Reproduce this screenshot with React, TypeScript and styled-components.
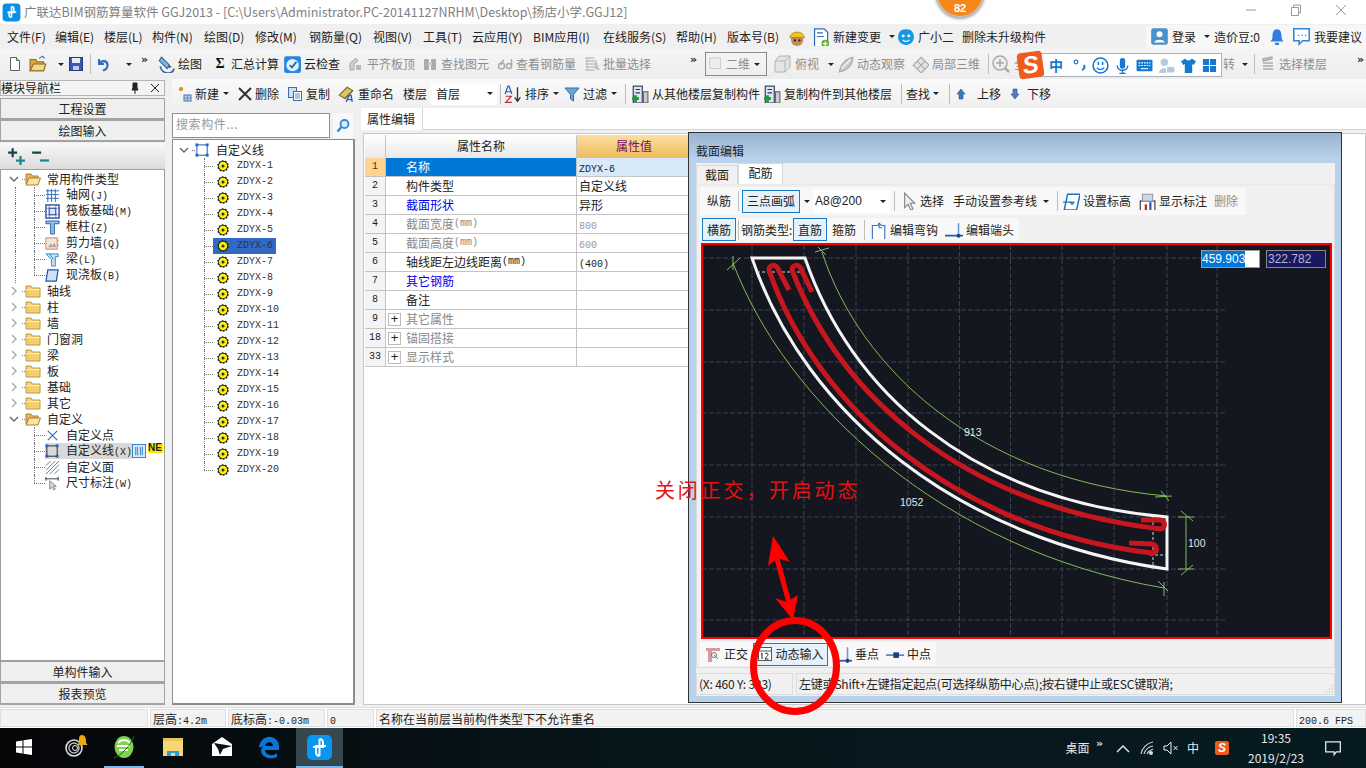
import React from "react";
import styled, { createGlobalStyle } from "styled-components";

const CJK = `"Noto Sans CJK SC", "Liberation Sans", sans-serif`;
const MONO = `"Liberation Mono", "Noto Sans CJK SC", monospace`;

const Global = createGlobalStyle`
  html, body { margin: 0; padding: 0; background: #fff; }
  * { box-sizing: border-box; }
  body { font: 12px/16px ${CJK}; color: #222; }
`;

const Root = styled.div`
  position: relative; width: 1366px; height: 768px; overflow: hidden;
  display: flex; flex-direction: column; background: #f0f0f0;
`;
const TitleBar = styled.div`
  height: 24px; flex: none; background: #fff; display: flex; align-items: center;
  padding-left: 2px; gap: 3px; color: #808080; font-size: 12.5px; position: relative;
`;
const WinButtons = styled.div`
  margin-left: auto; display: flex; width: 132px; height: 24px; align-items: center; justify-content: space-between; padding: 0 19px 4px 11px;
`;
const MenuBar = styled.div`height: 25px; flex: none; background: #f0f0f0; display: flex; align-items: center; padding-left: 7px;`;
const MenuItem = styled.span<{ $w: number; $ml?: number }>`flex: none; width: ${p => p.$w}px; margin-left: ${p => p.$ml ?? 0}px; white-space: nowrap; font-size: 12px; color: #222; display: inline-flex; align-items: center; gap: 3px;`;
const UserBox = styled.div`
  margin-left: 92px; height: 24px; width: 220px; background: #f7f7f7; display: flex; align-items: center; padding-left: 4px;
`;
const ToolRow = styled.div`
  height: 30px; flex: none; display: flex; align-items: center; padding-left: 7px;
  background: linear-gradient(#f5f5f5, #ededed);
`;
const Tool = styled.span<{ $w?: number; $muted?: boolean; $ml?: number }>`
  flex: none; display: inline-flex; align-items: center; gap: 3px; white-space: nowrap;
  width: ${p => (p.$w ? p.$w + "px" : "auto")}; margin-left: ${p => p.$ml ?? 0}px;
  color: ${p => (p.$muted ? "#8e8e8e" : "#222")}; font-size: 12px;
`;
const Sep = styled.span<{ $mx?: number }>`flex: none; width: 1px; height: 20px; background: #bdbdbd; margin: 0 ${p => p.$mx ?? 4}px;`;
const Caret = styled.span<{ $w?: number }>`
  flex: none; display: inline-flex; justify-content: center; width: ${p => p.$w ?? 10}px;
  &::after { content: ""; border: 3px solid transparent; border-top: 3px solid #222; margin-top: 3px; }
`;
const Chevrons = styled.span<{ $w?: number; $light?: boolean }>`
  flex: none; width: ${p => p.$w ?? 14}px; font: bold 11px/10px "DejaVu Sans", sans-serif; color: ${p => (p.$light ? "#ddd" : "#222")}; margin-top: -8px;
`;
const ViewCombo = styled.span`
  flex: none; width: 62px; height: 24px; border: 1px solid #8a8a8a; display: inline-flex; align-items: center; padding-left: 3px; gap: 3px; color: #8e8e8e; margin-right: 5px;
`;
const Sigma = styled.span`flex: none; width: 16px; text-align: center; font: bold 14px/16px "Liberation Serif", serif; color: #111;`;

const Workspace = styled.div`flex: 1; display: flex; min-height: 0;`;
const LeftCol = styled.div`width: 165px; flex: none; display: flex; flex-direction: column; padding: 1px 0 2px; background: #f0f0f0;`;
const PaneHeader = styled.div`
  height: 16px; flex: none; display: flex; align-items: center; border: 1px solid #b5b5b5; background: #f4f4f4; justify-content: space-between; padding-right: 3px; font-size: 12px; line-height: 14px;
`;
const PaneActions = styled.span`display: flex; gap: 8px;`;
const NavButton = styled.div<{ $mt?: number }>`
  height: 22px; flex: none; margin-top: ${p => p.$mt ?? 0}px; text-align: center; font-size: 12px; line-height: 20px;
  border: 1px solid #a3a3a3; border-bottom-width: 2px; background: #efefef; color: #222;
`;
const PlusBar = styled.div`
  height: 26px; flex: none; margin-top: 1px; background: linear-gradient(#f8f8f8, #dcdcdc); display: flex; align-items: center; gap: 6px; padding-left: 7px;
`;
const TreeBox = styled.div<{ $pt?: number }>`
  flex: 1; min-height: 0; background: #fff; border: 1px solid #9e9e9e; padding-top: ${p => p.$pt ?? 1}px; overflow: hidden; position: relative;
`;
const Row = styled.div<{ $pl?: number }>`height: 16px; display: flex; align-items: center; padding-left: ${p => p.$pl ?? 0}px; white-space: nowrap; position: relative;`;
const Expander = styled.span<{ $w?: number }>`flex: none; width: ${p => p.$w ?? 16}px; display: inline-flex; justify-content: center;`;
const Stub = styled.span<{ $w: number }>`flex: none; width: ${p => p.$w}px; border-top: 1px dotted #777; height: 0;`;
const Branch = styled.span<{ $last?: boolean; $w?: number }>`
  flex: none; width: ${p => p.$w ?? 11}px; height: 16px; position: relative;
  &::before { content: ""; position: absolute; left: 0; top: 0; height: ${p => (p.$last ? "8px" : "16px")}; border-left: 1px dotted #777; }
  &::after { content: ""; position: absolute; left: 0; right: 0; top: 8px; border-top: 1px dotted #777; }
`;
const OuterLine = styled.span<{ $on?: boolean }>`flex: none; width: 19px; height: 16px; margin-left: 14px; border-left: ${p => (p.$on ? "1px dotted #777" : "0")};`;
const TreeText = styled.span`
  font-size: 12px; line-height: 16px; margin-left: 6px; color: #222;
`;
const Half = styled.span`font: 10px/16px ${MONO}; color: inherit;`;
const SelectedRow = styled.span`display: inline-flex; align-items: center; background: #d9d9d9; height: 16px; width: 87px; flex: none;`;
const NewBadge = styled.span`font: bold 10px/10px "Liberation Sans", sans-serif; color: #222; background: #ffe800; width: 15px; overflow: hidden; height: 10px; margin-top: -7px; flex: none; margin-left: 1px;`;
const RightCol = styled.div`flex: 1; display: flex; flex-direction: column; min-width: 0;`;
const ToolRow2 = styled(ToolRow)`height: 29px; padding-left: 4px; margin-left: 7px; background: linear-gradient(#fafafa, #efefef);`;
const ComboWhite = styled.span`flex: none; width: 66px; height: 22px; background: #fff; display: inline-flex; align-items: center; justify-content: space-between; padding: 0 3px 0 5px;`;
const Spaced = styled.span<{ $ml: number }>`margin-left: ${p => p.$ml}px;`;
const Body = styled.div`flex: 1; display: flex; min-height: 0;`;
const ListCol = styled.div`width: 183px; margin-left: 7px; flex: none; display: flex; flex-direction: column; padding: 5px 0 2px;`;
const SearchRow = styled.div`height: 26px; flex: none; display: flex; gap: 3px;`;
const SearchInput = styled.div`width: 158px; height: 25px; background: #fff; border: 1px solid #8f8f8f; padding: 1px 3px; color: #999; font-size: 12px; line-height: 18px; letter-spacing: .05em;`;
const SearchBtn = styled.div`width: 20px; height: 25px; background: #f8f8f8; display: flex; align-items: center; justify-content: center;`;
const ListBox = styled(TreeBox)`border-width: 1px 2px 2px 1px; border-color: #8c8c8c;`;
const ListSel = styled.span<{ $on?: boolean }>`
  display: inline-flex; align-items: center; height: 16px; width: 63px; flex: none; padding-left: 4px; gap: 8px;
  background: ${p => (p.$on ? "#316ac5" : "transparent")};
`;
const CodeText = styled.span`font: 10px/16px ${MONO}; color: #333;`;
const Editor = styled.div`flex: 1; margin-left: 6px; display: flex; flex-direction: column; min-width: 0; padding-bottom: 2px;`;
const TabStrip = styled.div`height: 22px; flex: none; display: flex; border-bottom: 1px solid #d4d4d4; background: #fff;`;
const PropTab = styled.div`width: 62px; height: 22px; background: #fff; border-right: 1px solid #d4d4d4; padding: 2px 0 0 6px; font-size: 12px; line-height: 18px; color: #222;`;
const PropBody = styled.div`flex: 1; background: #fff; margin: 3px 0 0 2px; border: 1px solid #c8c8c8; padding: 1px; min-height: 0;`;
const PropGrid = styled.div`display: grid; grid-template-columns: 21px 191px 115px; grid-template-rows: 23px; grid-auto-rows: 19px;`;
const HeadCell = styled.div<{ $val?: boolean }>`
  text-align: center; line-height: 22px; font-size: 12px;
  background: ${p => (p.$val ? "linear-gradient(#fbdf9f, #efbb5d)" : "linear-gradient(#fff, #e9e9e9)")};
  color: ${p => (p.$val ? "#74106e" : "#222")}; border-right: 1px solid #c4c4c4;
`;
const NumCell = styled.div<{ $on?: boolean }>`
  background: ${p => (p.$on ? "#fdd58f" : "#f4f4f4")}; color: ${p => (p.$on ? "#7a1a1a" : "#222")}; text-align: center;
  font: 10px/18px ${MONO}; border-right: 1px solid #c4c4c4; border-bottom: 1px solid #c4c4c4;
`;
const NameCell = styled.div<{ $tone?: string; $on?: boolean }>`
  background: ${p => (p.$on ? "#0078d7" : "#fff")}; color: ${p => (p.$on ? "#fff" : p.$tone || "#222")};
  padding-left: 20px; font-size: 12px; line-height: 18px; border-right: 1px solid #c4c4c4; border-bottom: 1px solid #c4c4c4; white-space: nowrap; display: flex; align-items: center;
`;
const ValCell = styled.div<{ $on?: boolean; $muted?: boolean }>`
  background: ${p => (p.$on ? "#d8e9f9" : "#fff")}; color: ${p => (p.$muted ? "#999" : "#222")};
  padding-left: 2px; font-size: 12px; line-height: 18px; border-bottom: 1px solid #c4c4c4; white-space: nowrap;
`;
const PlusBox = styled.span`
  width: 13px; height: 13px; border: 1px solid #bbb; margin: 0 5px 0 -18px; flex: none; background: #fff; color: #222;
  font: 13px/10px "Liberation Sans", sans-serif; text-align: center;
`;
const StatusBar = styled.div`height: 21px; flex: none; display: flex; gap: 2px; padding: 1px 0; background: #fff; border-top: 1px solid #e0e0e0;`;
const StatusCell = styled.div<{ $w?: number }>`
  ${p => (p.$w ? `width:${p.$w}px;flex:none;` : "flex:1;")} background: #f2f2f2; border: 1px solid #dedede; padding-left: 2px; font-size: 12px; line-height: 17px; color: #222; white-space: nowrap;
`;
const Taskbar = styled.div`height: 40px; flex: none; background: linear-gradient(90deg, #050608, #07171c 50%, #061a20); display: flex; align-items: stretch; color: #eee;`;
const TaskSlot = styled.div<{ $w: number; $state?: "on" | "run" }>`
  width: ${p => p.$w}px; flex: none; display: flex; align-items: center; justify-content: center; position: relative;
  background: ${p => (p.$state === "on" ? "#37474f" : "transparent")};
  border-bottom: 2px solid ${p => (p.$state ? "#76b9ed" : "transparent")};
`;
const Tray = styled.div`margin-left: auto; display: flex; align-items: center; width: 301px; font-size: 12px; color: #e8e8e8;`;
const TrayItem = styled.span<{ $w: number }>`flex: none; width: ${p => p.$w}px; display: inline-flex; justify-content: center;`;
const Clock = styled.div`flex: none; width: 80px; text-align: center; font-size: 12px; line-height: 20px; color: #e8e8e8;`;

const Dialog = styled.div`
  position: absolute; left: 688px; top: 132px; width: 654px; height: 571px; background: #b9d1ea;
  border: 1px solid #2f3336; display: flex; flex-direction: column;
`;
const DialogTitle = styled.div`height: 26px; flex: none; padding: 10px 0 0 7px; font-size: 12px; line-height: 16px; color: #222; background: linear-gradient(#99b4d1, #b9d1ea);`;
const DialogInner = styled.div`flex: none; margin: 4px 6px 0 7px; height: 533px; background: #f0f0f0; display: flex; flex-direction: column;`;
const DialogTabs = styled.div`height: 21px; flex: none; display: flex; align-items: flex-end; background: #f0f0f0;`;
const DialogTab = styled.div<{ $on?: boolean }>`
  height: ${p => (p.$on ? 21 : 19)}px; width: ${p => (p.$on ? 45 : 42)}px; background: ${p => (p.$on ? "#fff" : "#f0f0f0")};
  border: 1px solid #d9d9d9; border-bottom: 0; text-align: center; font-size: 12px; line-height: 17px; color: #222;
`;
const DialogPanel = styled.div`height: 484px; flex: none; background: #f0f0f0; border: 1px solid #dcdcdc; border-top-color: #e8e8e8; padding: 2px 2px 0 3px; display: flex; flex-direction: column;`;
const DlgBar = styled.div<{ $w: number; $mt?: number; $h?: number; $pl?: number }>`
  width: ${p => p.$w}px; height: ${p => p.$h ?? 24}px; flex: none; margin-top: ${p => p.$mt ?? 0}px; background: #f8f8f8; display: flex; align-items: center; padding-left: ${p => p.$pl ?? 2}px;
`;
const LeadTool = styled(Tool)`padding-left: 5px;`;
const ActiveBtn = styled.span<{ $w: number; $ml?: number }>`
  flex: none; width: ${p => p.$w}px; height: 23px; margin-left: ${p => p.$ml ?? 0}px; border: 1px solid #1a7cc4; background: #e5f1fb;
  display: inline-flex; align-items: center; justify-content: center; gap: 2px; font-size: 12px; color: #222;
`;
const ComboA = styled.span`flex: none; width: 77px; height: 23px; background: #fff; display: inline-flex; align-items: center; justify-content: space-between; padding: 0 2px 0 2px; font: 12px/16px "Liberation Sans", sans-serif;`;
const CanvasWrap = styled.div`width: 631px; height: 396px; flex: none; margin: 2px 0 0 1px; border: 2px solid #f00; position: relative; background: #141720;`;
const CanvasSvg = styled.svg`display: block; width: 627px; height: 392px;`;
const CoordA = styled.div`
  position: absolute; left: 498px; top: 5px; width: 59px; height: 18px; background: #fff; border: 1px solid #999; font: 12px/16px "Liberation Sans", sans-serif;
`;
const CoordSel = styled.span`background: #0078d7; color: #fff; display: inline-block; height: 16px;`;
const CoordB = styled.div`
  position: absolute; left: 563px; top: 5px; width: 60px; height: 18px; background: #191960; border: 1px solid #888; color: #b4b4d8; padding-left: 1px; font: 12px/16px "Liberation Sans", sans-serif;
`;
const DlgStatus = styled.div`height: 22px; flex: none; margin-top: 5px; display: flex; gap: 3px;`;
const DlgCell = styled.div<{ $w?: number }>`
  ${p => (p.$w ? `width:${p.$w}px;flex:none;` : "flex:1;")} background: #f0f0f0; border: 1px solid #dcdcdc; padding-left: 2px; font-size: 12px; line-height: 20px; color: #222; white-space: nowrap; overflow: hidden; position: relative; letter-spacing: -.2px;
`;
const Grip = styled.svg`position: absolute; right: 0; bottom: 0; width: 10px; height: 10px;`;
const Badge = styled.div`
  position: absolute; left: 936px; top: -33px; width: 48px; height: 50px; border-radius: 50%; background: #f7871a; border: 1px solid #c9c9c9;
  box-shadow: 0 1px 3px 1px rgba(90,90,90,.55); color: #fff; text-align: center; padding-top: 33px; font: bold 11px/14px "Liberation Sans", sans-serif;
`;
const Sogou = styled.div`
  position: absolute; left: 1020px; top: 53px; width: 202px; height: 24px; background: #fff; border: 1px solid #a8b0c0; display: flex; align-items: center; padding-left: 28px; gap: 5px; color: #1679d0;
`;
const SogouS = styled.div`
  position: absolute; left: 1018px; top: 52px; width: 25px; height: 26px; background: #ef5a1d; transform: rotate(-8deg); border-radius: 4px; color: #fff;
  font: italic bold 24px/25px "Liberation Sans", sans-serif; text-align: center;
`;
const SogouZh = styled.span`font: bold 14px/16px ${CJK}; color: #1679d0; width: 16px; flex: none; margin-right: 3px;`;
const Note = styled.div`position: absolute; left: 655px; top: 478px; color: #e81010; font: 400 20px/26px "Liberation Serif", "Noto Sans CJK SC", serif; letter-spacing: 2.8px; white-space: nowrap;`;
const Marks = styled.svg`position: absolute; left: 740px; top: 530px; width: 110px; height: 190px; pointer-events: none;`;

const IconSvg = styled.svg`flex: none; display: block;`;
const Svg: React.FC<React.PropsWithChildren<{ s?: number; vb?: string }>> = ({ s = 16, vb = "0 0 16 16", children }) => (
  <IconSvg width={s} height={s} viewBox={vb}>{children}</IconSvg>
);

const I = {
  app: () => <Svg s={19}><rect x="0.5" y="0.5" width="15" height="15" rx="3" fill="#0a8ee8" /><path d="M8 3v9M8 3a2 2 0 0 1 2 2v3H4.5M8 12a2 2 0 0 1-2-2V7.5h6" fill="none" stroke="#fff" strokeWidth="1.3" /></Svg>,
  doc: () => <Svg><path d="M3.5 1.5h6l3 3v10h-9z" fill="#fff" stroke="#5a6470" /><path d="M9.5 1.5v3h3" fill="#dde" stroke="#5a6470" /></Svg>,
  open: () => <Svg s={18}><path d="M1 4h5l1 2h6v8H1z" fill="#d9a93c" stroke="#8a6a20" /><path d="M1 14l3-6h11l-2 6z" fill="#f4d88a" stroke="#8a6a20" /><path d="M9 3l3-2 2 2" fill="none" stroke="#3a70b0" /></Svg>,
  save: () => <Svg><rect x="1.5" y="1.5" width="13" height="13" fill="#3f58b8" stroke="#28367a" /><rect x="4" y="2" width="8" height="5" fill="#e8ecf8" /><rect x="5" y="10" width="6" height="4" fill="#c8cfe4" /></Svg>,
  undo: () => <Svg><path d="M4 3v5h5" fill="none" stroke="#2b6cc4" strokeWidth="2" /><path d="M4.5 8C6 4 12 4 12.5 8.5 13 12 10 14 8 14.5" fill="none" stroke="#2b6cc4" strokeWidth="2.2" /></Svg>,
  draw: () => <Svg s={18}><path d="M4 2l7 7-2 3-7-7z" fill="#8fb4e2" stroke="#3a65a5" /><path d="M3 10c0 4 4 6 7 6 3 0 5-2 5-4" fill="none" stroke="#3a65a5" strokeWidth="1.5" /><path d="M10 9l3 1-2 2z" fill="#555" /></Svg>,
  cloud: () => <Svg s={18}><rect x="1" y="1" width="15" height="15" rx="2" fill="#2a86d8" /><circle cx="8.5" cy="9" r="5.5" fill="#dff0ff" /><path d="M6 9l2 2 4-5" fill="none" stroke="#1a66b0" strokeWidth="1.6" /></Svg>,
  level: () => <Svg><path d="M2 14V7l6-5 2 3-4 3v6z" fill="#ccc" stroke="#aaa" /><path d="M8 14V9h5v5z" fill="#b8b8b8" /></Svg>,
  binoc: () => <Svg><rect x="2" y="3" width="5" height="11" rx="1" fill="#aaa" /><rect x="9" y="3" width="5" height="11" rx="1" fill="#aaa" /><rect x="6" y="6" width="4" height="3" fill="#ccc" /></Svg>,
  qty: () => <Svg><circle cx="4.5" cy="10" r="3" fill="none" stroke="#aaa" strokeWidth="1.5" /><path d="M7 4C5 5 4.5 7 4 9" stroke="#aaa" fill="none" strokeWidth="1.5" /><circle cx="12" cy="10" r="2.5" fill="none" stroke="#aaa" strokeWidth="1.5" /><path d="M14.5 3v7" stroke="#aaa" strokeWidth="1.5" /></Svg>,
  batch: () => <Svg><path d="M1.5 2h9M1.5 5h11M1.5 8h11M1.5 11h11M1.5 14h9" stroke="#aaa" /><path d="M3 1v14M12 6l3 8-4-2z" stroke="#bbb" fill="#ccc" /></Svg>,
  box: () => <Svg s={14}><rect x="1" y="1" width="12" height="12" fill="#eee" stroke="#c4c4c4" /></Svg>,
  cube: () => <Svg s={20} vb="0 0 20 20"><path d="M3 7l4-5h11v11l-5 5H3z" fill="#e4e4e4" stroke="#b4b4b4" /><path d="M3 7h10v11M13 7l5-5" fill="none" stroke="#b4b4b4" /></Svg>,
  orbit: () => <Svg s={18}><path d="M3 15C4 8 9 3 15 2c0 7-5 12-12 13z" fill="#c8c8c8" stroke="#aaa" /><path d="M5 12l8-8" stroke="#eee" strokeWidth="1.5" /></Svg>,
  part3d: () => <Svg s={18}><path d="M9 2l7 7-7 7-7-7z" fill="#e4e4e4" stroke="#aaa" /><path d="M5.5 5.5l7 7M12.5 5.5l-7 7" stroke="#aaa" /></Svg>,
  zoom: () => <Svg s={20} vb="0 0 20 20"><circle cx="9" cy="9" r="7" fill="#eee" stroke="#aaa" strokeWidth="1.5" /><path d="M9 5v8M5 9h8" stroke="#aaa" strokeWidth="1.5" /><path d="M14 14l4 4" stroke="#aaa" strokeWidth="2.5" /></Svg>,
  floors: () => <Svg><path d="M3 3l9-2v2l-9 2zM3 7h10M3 10h10M3 13h10" stroke="#aaa" fill="#ddd" strokeWidth="1.3" /></Svg>,
  newBtn: () => <Svg><path d="M5 1v4M3 3h4" stroke="#d89a10" strokeWidth="2.5" /><rect x="8" y="9" width="7" height="6" fill="#bcd2ee" stroke="#4a74b0" /><path d="M11.5 9v6M8 12h7" stroke="#4a74b0" strokeWidth=".7" /></Svg>,
  x: () => <Svg><path d="M2 2l12 12M14 2L2 14" stroke="#333" strokeWidth="2" /></Svg>,
  copy: () => <Svg><rect x="1.5" y="1.5" width="8" height="10" fill="#cfe0f5" stroke="#3d6db0" /><rect x="6.5" y="5.5" width="8" height="9" fill="#fff" stroke="#3d6db0" /><path d="M8 8h5M8 10h5M8 12h5" stroke="#3d6db0" strokeWidth=".8" /></Svg>,
  rename: () => <Svg s={18}><path d="M2 9l7-7 5 3-7 7z" fill="#e5c35c" stroke="#7a6a30" /><path d="M7 12l7-7" stroke="#7a6a30" /><path d="M8 15l3-6h1.500l1 6M9.500 13h3.500" fill="none" stroke="#2a5ba8" strokeWidth="1.200" /></Svg>,
  sort: () => <Svg s={18}><path d="M1 8l2.500-7h1L7 8M2 6h4" fill="none" stroke="#2a5ba8" strokeWidth="1.100" /><path d="M1.500 10h5l-5 5.500h5.500" fill="none" stroke="#c42a2a" strokeWidth="1.100" /><path d="M12 2v12M9.500 11l2.500 3.500 2.500-3.500" fill="none" stroke="#333" strokeWidth="1.200" /></Svg>,
  filter: () => <Svg><path d="M1 2h14L9.500 8.500V15l-3-2V8.500z" fill="#6ea4dc" stroke="#2f6cb2" /></Svg>,
  fromFloor: () => <Svg s={18}><rect x="2" y="1" width="8" height="15" fill="#dde6f2" stroke="#335" /><path d="M4 4h4M4 7h4" stroke="#335" /><rect x="11" y="6" width="4" height="10" fill="#ccc" stroke="#666" /><path d="M1 12h6M4 9v6" stroke="#1b9a35" strokeWidth="2.500" /></Svg>,
  up: () => <Svg s={12} vb="0 0 12 12"><path d="M6 1l4 5H8v5H4V6H2z" fill="#3d78c8" stroke="#23528f" strokeWidth=".6" /></Svg>,
  down: () => <Svg s={12} vb="0 0 12 12"><path d="M6 11l4-5H8V1H4v5H2z" fill="#5b78c0" stroke="#23528f" strokeWidth=".6" /></Svg>,
  helmet: () => <Svg s={18}><circle cx="9" cy="10.500" r="5.500" fill="#c58a5c" /><path d="M2.500 8.500C3 2 15 2 15.500 8.500z" fill="#f2c31c" stroke="#9a7a10" strokeWidth=".6" /><circle cx="7" cy="11" r="1" fill="#222" /><circle cx="11" cy="11" r="1" fill="#222" /></Svg>,
  change: () => <Svg s={19}><path d="M3 1.500h8l3 3v12H3z" fill="#fff" stroke="#2a6cb8" /><path d="M5 5h5M5 8h6" stroke="#2a6cb8" /><circle cx="12" cy="14" r="3.200" fill="#5bb030" /><path d="M12 12v4M10 14h4" stroke="#fff" /></Svg>,
  mascot: () => <Svg s={18}><path d="M8 1c5 0 7 3 7 7s-3 7-7 7-7-3-7-7 2-7 7-7z" fill="#1398e8" /><circle cx="5.500" cy="7" r="1.300" fill="#fff" /><circle cx="10.500" cy="7" r="1.300" fill="#fff" /><path d="M5 10.500c2 2 4 2 6 0" stroke="#fff" fill="none" /></Svg>,
  user: () => <Svg s={19}><rect x="1" y="1" width="14" height="14" rx="2" fill="#4a92ca" /><circle cx="8" cy="6" r="2.500" fill="#fff" /><path d="M3.500 13c.5-3 8.500-3 9 0z" fill="#fff" /></Svg>,
  bell: () => <Svg s={18}><path d="M8 1c3 0 4 3 4 6 0 3 1 4 2 5H2c1-1 2-2 2-5 0-3 1-6 4-6z" fill="#2f7fe0" /><rect x="6" y="13" width="4" height="2" rx="1" fill="#2f7fe0" /></Svg>,
  chat: () => <Svg s={19}><path d="M1.500 1.500h13v10H9l-3 3v-3H1.500z" fill="#fff" stroke="#2f86d8" strokeWidth="1.300" /><path d="M5 7h1M8 7h1M11 7h1" stroke="#2f86d8" /></Svg>,
  pin: () => <Svg s={12} vb="0 0 12 12"><path d="M4 1h4v5l1 2H3l1-2zM6 8v4" fill="#222" stroke="#222" /></Svg>,
  close: () => <Svg s={12} vb="0 0 12 12"><path d="M2 2l8 8M10 2l-8 8" stroke="#222" /></Svg>,
  plus2: () => <Svg s={18}><path d="M5 1v8M1 5h8" stroke="#13444a" strokeWidth="2" /><path d="M12 8v8M8 12h8" stroke="#1a8a8a" strokeWidth="2" /></Svg>,
  minus2: () => <Svg s={18}><path d="M1 5h8" stroke="#13444a" strokeWidth="2" /><path d="M8 12h8" stroke="#1a8a8a" strokeWidth="2" /></Svg>,
  chevD: () => <svg width="10" height="6" viewBox="0 0 10 6"><path d="M1 1l4 4 4-4" fill="none" stroke="#666" strokeWidth="1.400" /></svg>,
  chevR: () => <svg width="6" height="10" viewBox="0 0 6 10"><path d="M1 1l4 4-4 4" fill="none" stroke="#aaa" strokeWidth="1.400" /></svg>,
  folder: () => <Svg><path d="M1 3h5l1.500 2H15v9H1z" fill="#f2cf72" stroke="#c09a40" /><path d="M1.500 6h13v1h-13z" fill="#fff3c4" /></Svg>,
  folderOpen: () => <Svg><path d="M1 3h5l1.500 2H13v8H1z" fill="#e3b654" stroke="#a8843a" /><path d="M1 14l3-7h11.500L13 14z" fill="#fbe4a2" stroke="#a8843a" /></Svg>,
  grid: () => <Svg s={15}><path d="M3 1v14M7 1v14M11 1v14M1 3h14M1 7h14M1 11h14" stroke="#3166bd" strokeWidth="1" /></Svg>,
  raft: () => <Svg s={15}><rect x="1" y="1" width="14" height="14" fill="none" stroke="#2d4fa0" strokeWidth="1.500" /><rect x="4.500" y="4.500" width="7" height="7" fill="#dbe6f6" stroke="#2d4fa0" /><path d="M1 4.500h14M1 11.500h14M4.500 1v14M11.500 1v14" stroke="#2d4fa0" strokeWidth=".6" /></Svg>,
  column: () => <Svg s={15}><path d="M1 1h14v3H10v11H6V4H1z" fill="#8dbfe8" stroke="#2d5fa8" /></Svg>,
  wall: () => <Svg s={15}><rect x="1" y="2" width="12" height="12" fill="#f4e6dc" stroke="#c88050" /><path d="M3 12l3-4 2 2 2-3 2 5z" fill="#aaa" /><path d="M14 4v2M14 9v2" stroke="#e08030" /></Svg>,
  beam: () => <Svg s={15}><path d="M1 2h13v3H11v10H7V8z" fill="#c9e4f7" stroke="#2f86c8" /><path d="M5 2l4 6" stroke="#2f86c8" /></Svg>,
  slab: () => <Svg s={15}><path d="M3 2h11l-2 12H1z" fill="#cfe2f6" stroke="#1e56ae" strokeWidth="1.300" /></Svg>,
  point: () => <Svg s={15}><path d="M3 3l10 10M13 3L3 13" stroke="#3170b8" strokeWidth="1.300" /></Svg>,
  line: () => <Svg s={15}><rect x="2" y="2" width="11" height="11" fill="none" stroke="#222" /><g fill="#1f62c8"><rect x="0.500" y="0.500" width="3" height="3" /><rect x="11.500" y="0.500" width="3" height="3" /><rect x="0.500" y="11.500" width="3" height="3" /><rect x="11.500" y="11.500" width="3" height="3" /></g></Svg>,
  rootLine: () => <Svg s={15}><rect x="2" y="2" width="11" height="11" fill="none" stroke="#1e50b4" /><g fill="#1f62c8"><rect x="0.500" y="0.500" width="3" height="3" /><rect x="11.500" y="0.500" width="3" height="3" /><rect x="0.500" y="11.500" width="3" height="3" /><rect x="11.500" y="11.500" width="3" height="3" /></g></Svg>,
  face: () => <Svg s={15}><path d="M1 6l5-5M1 11L11 1M1 15L15 1M5 15L15 5M10 15l5-5" stroke="#4a78c0" /></Svg>,
  dim: () => <Svg s={15}><path d="M0.500 3h14M1 1v4M14 1v4" stroke="#333" /><path d="M5 5v9l2.500-2 2 3 1.500-1-2-3h3z" fill="#d8d8d8" stroke="#888" /></Svg>,
  table: () => <Svg s={15}><rect x="0.500" y="0.500" width="14" height="14" fill="#d8e9f9" stroke="#2f7ac8" /><path d="M4 3v9M6 3v9M9 3v9M11 3v9" stroke="#2f7ac8" /></Svg>,
  gear: () => <Svg s={12} vb="0 0 12 12"><circle cx="6" cy="6" r="5" fill="#111" strokeDasharray="1.800 1.300" stroke="#222" strokeWidth="1.500" /><circle cx="6" cy="6" r="4.200" fill="#ffef00" /><circle cx="6" cy="6" r="1.600" fill="#22386c" /></Svg>,
  search: () => <Svg><circle cx="9.500" cy="6" r="4" fill="#d8ecfb" stroke="#2d8ad8" strokeWidth="1.800" /><path d="M6.500 9L2.500 13.500" stroke="#2d8ad8" strokeWidth="2.500" /></Svg>,
  cursor: () => <Svg s={18}><path d="M5 1v13l3-3 2.500 5 2-1-2.500-5h4z" fill="#eee" stroke="#888" /></Svg>,
  elev: () => <Svg s={18}><path d="M5 2h11l-3 14H2z" fill="#fff" stroke="#1c74c4" strokeWidth="1.300" /><path d="M1 9h10M7 9l2 2 2-2" stroke="#1c74c4" fill="none" /></Svg>,
  mark: () => <Svg s={18}><rect x="2" y="8" width="13" height="9" fill="#fff" stroke="#334" /><path d="M4 2h9v6H4z" fill="#ccd8e8" stroke="#99a" /><rect x="6" y="11" width="2" height="5" fill="#c22" /><rect x="10" y="9" width="2" height="7" fill="#2860b8" /></Svg>,
  hook: () => <Svg s={18}><path d="M3 4h5l1-2 2 2h3v13H3z" fill="#fff" stroke="#3a74bc" /><path d="M9 2v4h3" fill="none" stroke="#3a74bc" /></Svg>,
  endHead: () => <Svg s={18}><path d="M0 13h16" stroke="#2a5fae" strokeWidth="1.600" /><path d="M12 2v13" stroke="#6b9ad4" strokeWidth="1.400" /><circle cx="12" cy="13" r="1.700" fill="#1c3f80" /></Svg>,
  ortho: () => <Svg s={16}><path d="M1 2h14v3H7v11H3V5H1z" fill="#d89a9a" /><path d="M9 9l4 4" stroke="#777" /><circle cx="9" cy="9" r="2.500" fill="none" stroke="#777" /></Svg>,
  dyn: () => <Svg s={16}><rect x="1.500" y="1.500" width="13" height="13" fill="#fff" stroke="#555" /><path d="M1.500 5h13" stroke="#555" /><path d="M4 8l1-1v6M8 8c1-1.500 3-1 3 .5S8.500 11 8 13h3.500" fill="none" stroke="#222" strokeWidth="1" /></Svg>,
  perp: () => <Svg s={18}><path d="M0 14h18" stroke="#2a5fae" strokeWidth="1.600" /><path d="M12 2v15" stroke="#6b9ad4" strokeWidth="1.400" /><circle cx="12" cy="14" r="1.700" fill="#1c3f80" /></Svg>,
  mid: () => <Svg s={18}><path d="M0 9h18" stroke="#5a88c8" strokeWidth="1.600" /><rect x="6.500" y="6.500" width="5" height="5" fill="#1c3f80" /></Svg>,
  win: () => <Svg s={16}><path d="M0 2.500l6.500-1v6H0zM7.500 1.300L16 0v7.500H7.500zM0 8.500h6.500v6l-6.500-1zM7.500 8.500H16V16l-8.500-1.300z" fill="#fff" /></Svg>,
  ring: () => <Svg s={28} vb="0 0 28 28"><circle cx="12" cy="15" r="8" fill="none" stroke="#ddd" strokeWidth="1.600" /><circle cx="12" cy="15" r="5" fill="none" stroke="#bbb" strokeWidth="1.400" /><circle cx="13" cy="15" r="2.500" fill="none" stroke="#eee" /><path d="M20 2c3 0 4 3 4 6s1 3 2 4H15c1-1 2-1 2-4s0-6 3-6z" fill="#eda90e" /></Svg>,
  ie: () => <Svg s={26} vb="0 0 26 26"><ellipse cx="13" cy="13" rx="9.500" ry="11" fill="#7ed24c" /><path d="M6 12h13M8 16h9" stroke="#fff" strokeWidth="1.800" /><path d="M7 9c3-4 9-4 12 0" fill="none" stroke="#fff" strokeWidth="1.800" /><path d="M3 24C9 22 20 12 23 2" fill="none" stroke="#1f6a20" /></Svg>,
  explorer: () => <Svg s={24} vb="0 0 24 24"><path d="M2 3h8l2 2h10v16H2z" fill="#f8d673" /><rect x="2" y="3" width="20" height="3" fill="#eac558" /><path d="M6 16h12v5H6z" fill="#2c9be0" /><rect x="10" y="18" width="4" height="3" fill="#f8d673" /></Svg>,
  mail: () => <Svg s={24} vb="0 0 24 24"><path d="M2 9l10-7 10 7v12H2z" fill="#fff" /><path d="M4 8l18 3-9 3-3 6-2-6z" fill="#0b1318" /></Svg>,
  edge: () => <Svg s={24} vb="0 0 24 24"><path d="M2 12C3 5 9 1 14 2c6 1 9 6 8 13H8c0 5 8 7 12 3v4c-6 3-15 1-16-6 0-2 1-3 2-5-1 1-3 2-4 1zm6-1h8c0-5-7-5-8 0z" fill="#0b74d8" /></Svg>,
  taskApp: () => <Svg s={27} vb="0 0 27 27"><rect x="1" y="1" width="25" height="25" rx="5" fill="#0896ee" /><path d="M13.500 5v17M13.500 5a3.500 3.500 0 0 1 3.500 3.500V13H7M13.500 22a3.500 3.500 0 0 1-3.500-3.500V12h10" fill="none" stroke="#fff" strokeWidth="2" /></Svg>,
  caretUp: () => <svg width="14" height="9" viewBox="0 0 14 9"><path d="M1 8l6-6 6 6" fill="none" stroke="#eee" strokeWidth="1.300" /></svg>,
  wifi: () => <Svg><path d="M2 14C3 8 8 3 14 2M5 14c1-4 4-7 9-8M8 14c1-2 3-4 6-5" fill="none" stroke="#ccc" strokeWidth="1.200" /><circle cx="12" cy="13" r="2" fill="#ddd" /></Svg>,
  mute: () => <Svg><path d="M1 6h3l4-4v12l-4-4H1z" fill="none" stroke="#eee" /><path d="M10.500 6l4 4M14.500 6l-4 4" stroke="#eee" /></Svg>,
  notify: () => <Svg s={18}><path d="M1.500 2.500h13v9H11l-2 2.500v-2.500H1.500z" fill="none" stroke="#eee" strokeWidth="1.100" /></Svg>,
  comma: () => <Svg s={14} vb="0 0 14 14"><circle cx="3" cy="4" r="1.800" fill="none" stroke="#1679d0" strokeWidth="1.200" /><path d="M11 7c1 2 0 4-2 5" stroke="#1679d0" strokeWidth="2" fill="none" /></Svg>,
  smile: () => <Svg s={17}><circle cx="8" cy="8" r="7" fill="none" stroke="#1679d0" strokeWidth="1.500" /><path d="M6 4.500v3M10 4.500v3" stroke="#1679d0" strokeWidth="1.400" /><path d="M4.500 10c2 2.500 5 2.500 7 0" fill="none" stroke="#1679d0" strokeWidth="1.300" /></Svg>,
  mic: () => <Svg s={17}><rect x="5.500" y="1" width="5" height="10" rx="2.500" fill="#1679d0" /><path d="M3 8c0 6 10 6 10 0M8 13v2M5 15.500h6" fill="none" stroke="#1679d0" strokeWidth="1.300" /></Svg>,
  kbd: () => <Svg s={17}><rect x="0.500" y="2.500" width="15" height="11" rx="1" fill="#1679d0" /><path d="M2.500 5.500h11M2.500 8h11" stroke="#fff" strokeDasharray="1.500 1" /><path d="M4.500 11h7" stroke="#fff" /></Svg>,
  userTag: () => <Svg s={17}><circle cx="6" cy="5" r="3.500" fill="#b9c9de" /><path d="M1 15c0-6 10-6 10 0z" fill="#b9c9de" /><rect x="8" y="9" width="8" height="6" rx="1" fill="#b9c9de" stroke="#fff" /></Svg>,
  shirt: () => <Svg s={17}><path d="M5 1.500L1 4l2 3.500 1.500-.8V15h7V6.700l1.500.8L15 4l-4-2.500C10 4 6 4 5 1.500z" fill="#1679d0" /></Svg>,
  tiles: () => <Svg s={15}><path d="M1 1h6.500v6.500H1zM8.500 1H15v6.500H8.500zM1 8.500h6.500V15H1zM8.500 8.500H15V15H8.500z" fill="#1679d0" /></Svg>,
};

const TrayS = styled.span`
  width: 14px; height: 14px; background: #ee5a1c; border-radius: 2px; color: #fff; text-align: center;
  font: italic bold 12px/14px "Liberation Sans", sans-serif;
`;

const MENU: [string, number][] = [["文件(F)", 48], ["编辑(E)", 49], ["楼层(L)", 48], ["构件(N)", 52], ["绘图(D)", 51], ["修改(M)", 54], ["钢筋量(Q)", 64], ["视图(V)", 50], ["工具(T)", 49], ["云应用(Y)", 61], ["BIM应用(I)", 70], ["在线服务(S)", 73], ["帮助(H)", 51], ["版本号(B)", 60]];

const half = (ascii: string) => <Half>{ascii}</Half>;

const COMMON: [keyof typeof I, string, string][] = [
  ["grid", "轴网", "(J)"], ["raft", "筏板基础", "(M)"], ["column", "框柱", "(Z)"], ["wall", "剪力墙", "(Q)"], ["beam", "梁", "(L)"], ["slab", "现浇板", "(B)"],
];
const FOLDERS = ["轴线", "柱", "墙", "门窗洞", "梁", "板", "基础", "其它"];
const PROPS: { n: string; name: string; val?: string; tone?: string; muted?: boolean; plus?: boolean; unit?: string }[] = [
  { n: "1", name: "名称", val: "ZDYX-6" },
  { n: "2", name: "构件类型", val: "自定义线" },
  { n: "3", name: "截面形状", val: "异形", tone: "#0000f0" },
  { n: "4", name: "截面宽度", unit: "(mm)", val: "800", tone: "#8a8a8a", muted: true },
  { n: "5", name: "截面高度", unit: "(mm)", val: "600", tone: "#8a8a8a", muted: true },
  { n: "6", name: "轴线距左边线距离", unit: "(mm)", val: "(400)" },
  { n: "7", name: "其它钢筋", tone: "#0000f0" },
  { n: "8", name: "备注" },
  { n: "9", name: "其它属性", tone: "#8a8a8a", plus: true },
  { n: "18", name: "锚固搭接", tone: "#8a8a8a", plus: true },
  { n: "33", name: "显示样式", tone: "#8a8a8a", plus: true },
];

const VX = [752, 804, 856, 908, 959.5, 1010.5, 1062, 1114, 1167, 1217];
const HY = [258, 310, 362, 413, 465, 517, 569, 620];
const Green = "#8fce5c";

const Drawing = () => (
  <CanvasSvg viewBox="703 245 627 392">
    <g stroke="#3d434e" strokeWidth="1" strokeDasharray="5 2" fill="none">
      {VX.map(x => <path key={x} d={`M${x} 245V639`} />)}
      {HY.map(y => <path key={y} d={`M702 ${y}H1225`} />)}
    </g>
    <g fill="none" stroke={Green} strokeWidth=".9">
      <path d="M822 252C860 370 980 480 1167 496" />
      <path d="M733 263C785 400 940 550 1164 588" />
      <path d="M727 270l13-12M733 256l0 14M815 252l14-4M818 247l8 8M1155 497l17-1M1161 491l8 10M1158 581l10 10M1164 582l0 14M1178 517h16M1178 569h16M1181 511l12 10M1181 575l12-10M1186 517V569" />
    </g>
    <path d="M752 258H805C850 390 970 500 1167 517V569C960 540 805 415 752 258Z" fill="none" stroke="#f4f4f4" strokeWidth="3" />
    <g stroke="#cfd6e0" strokeWidth="1" strokeDasharray="3 2" fill="none">
      <path d="M757 272H805M1153 517V569M1150 555H1167" />
    </g>
    <g fill="none" stroke="#c8161f" strokeWidth="5" strokeLinecap="butt">
      <path d="M812 292L801 269C800 264 792 264 792 270C840 395 960 505 1160 529C1166 529 1166 520 1160 520H1141" />
      <path d="M789 290L778 269C777 264 769 264 769 270C815 405 955 530 1152 553C1158 553 1158 545 1152 544L1129 543" />
    </g>
    <g fill="#e6e6e6" fontFamily="Liberation Sans" fontSize="10.5">
      <text x="964" y="436">913</text>
      <text x="900" y="506">1052</text>
      <text x="1188" y="547">100</text>
    </g>
  </CanvasSvg>
);

export default function App() {
  return (
    <Root>
      <Global />
      <TitleBar>
        <I.app />
        <span>广联达BIM钢筋算量软件 GGJ2013 - [C:\Users\Administrator.PC-20141127NRHM\Desktop\扬店小学.GGJ12]</span>
        <WinButtons>
          <svg width="12" height="12" viewBox="0 0 12 12"><path d="M1 6h10" stroke="#999" /></svg>
          <svg width="12" height="12" viewBox="0 0 12 12"><path d="M3.5 3V1h7v8H8.500M1.500 3.500h7v8h-7z" fill="none" stroke="#999" /></svg>
          <svg width="12" height="12" viewBox="0 0 12 12"><path d="M1 1l10 10M11 1L1 11" stroke="#999" /></svg>
        </WinButtons>
      </TitleBar>
      <MenuBar>
        {MENU.map(([m, w]) => <MenuItem key={m} $w={w}>{m}</MenuItem>)}
        <MenuItem $w={24}><I.helmet /></MenuItem>
        <MenuItem $w={76}><I.change />新建变更</MenuItem>
        <Caret $w={10} />
        <MenuItem $w={65}><I.mascot />广小二</MenuItem>
        <MenuItem $w={92}>删除未升级构件</MenuItem>
        <UserBox>
          <MenuItem $w={54}><I.user />登录</MenuItem>
          <Caret $w={6} />
          <MenuItem $w={54} $ml={4}>造价豆:0</MenuItem>
          <MenuItem $w={24}><I.bell /></MenuItem>
          <MenuItem $w={70}><I.chat />我要建议</MenuItem>
        </UserBox>
      </MenuBar>
      <ToolRow>
        <Tool $w={22}><I.doc /></Tool>
        <Tool $w={24}><I.open /></Tool>
        <Caret $w={15} />
        <Tool $w={18}><I.save /></Tool>
        <Sep $mx={4} />
        <Tool $w={22}><I.undo /></Tool>
        <Caret $w={24} />
        <Chevrons $w={16}>»</Chevrons>
        <Tool $w={55}><I.draw />绘图</Tool>
        <Tool $w={71}><Sigma>Σ</Sigma>汇总计算</Tool>
        <Tool $w={65}><I.cloud />云检查</Tool>
        <Tool $w={74} $muted><I.level />平齐板顶</Tool>
        <Tool $w={75} $muted><I.binoc />查找图元</Tool>
        <Tool $w={87} $muted><I.qty />查看钢筋量</Tool>
        <Tool $w={106} $muted><I.batch />批量选择</Tool>
        <Chevrons $w={15}>»</Chevrons>
        <ViewCombo><I.box />二维<Caret $w={8} /></ViewCombo>
        <Tool $w={53} $muted><I.cube />俯视</Tool>
        <Caret $w={11} />
        <Tool $w={75} $muted><I.orbit />动态观察</Tool>
        <Tool $w={75} $muted><I.part3d />局部三维</Tool>
        <Sep $mx={2} />
        <Tool $w={232} $muted><I.zoom />全</Tool>
        <Tool $w={18} $muted>转</Tool>
        <Caret $w={8} />
        <Sep $mx={5} />
        <Tool $w={97} $muted><I.floors />选择楼层</Tool>
        <Chevrons $w={12}>»</Chevrons>
      </ToolRow>
      <Workspace>
        <LeftCol>
          <PaneHeader>模块导航栏<PaneActions><I.pin /><I.close /></PaneActions></PaneHeader>
          <NavButton $mt={2}>工程设置</NavButton>
          <NavButton>绘图输入</NavButton>
          <PlusBar><I.plus2 /><I.minus2 /></PlusBar>
          <TreeBox>
            <Row $pl={5}>
              <Expander><I.chevD /></Expander><Stub $w={3} /><I.folderOpen /><TreeText>常用构件类型</TreeText>
            </Row>
            {COMMON.map(([ic, t, a], i) => {
              const C = I[ic];
              return (
                <Row key={t}>
                  <OuterLine $on />
                  <Branch $last={i === COMMON.length - 1} />
                  <C />
                  <TreeText>{t}{half(a)}</TreeText>
                </Row>
              );
            })}
            {FOLDERS.map(f => (
              <Row key={f} $pl={5}>
                <Expander><I.chevR /></Expander><Stub $w={3} /><I.folder /><TreeText>{f}</TreeText>
              </Row>
            ))}
            <Row $pl={5}>
              <Expander><I.chevD /></Expander><Stub $w={3} /><I.folderOpen /><TreeText>自定义</TreeText>
            </Row>
            <Row><OuterLine /><Branch /><I.point /><TreeText>自定义点</TreeText></Row>
            <Row>
              <OuterLine /><Branch />
              <SelectedRow><I.line /><TreeText>自定义线{half("(X)")}</TreeText></SelectedRow>
              <I.table /><NewBadge>NE</NewBadge>
            </Row>
            <Row><OuterLine /><Branch /><I.face /><TreeText>自定义面</TreeText></Row>
            <Row><OuterLine /><Branch $last /><I.dim /><TreeText>尺寸标注{half("(W)")}</TreeText></Row>
          </TreeBox>
          <NavButton>单构件输入</NavButton>
          <NavButton>报表预览</NavButton>
        </LeftCol>
        <RightCol>
          <ToolRow2>
            <Tool $w={49}><I.newBtn />新建<Caret $w={8} /></Tool>
            <Tool $w={12} />
            <Tool $w={18}><I.x /></Tool>
            <Tool $w={32}>删除</Tool>
            <Tool $w={50}><I.copy />复制</Tool>
            <Tool $w={66}><I.rename />重命名</Tool>
            <Tool $w={28}>楼层</Tool>
            <ComboWhite>首层<Caret $w={8} /></ComboWhite>
            <Sep $mx={3} />
            <Tool $w={60}><I.sort />排序<Caret $w={8} /></Tool>
            <Tool $w={56}><I.filter />过滤<Caret $w={8} /></Tool>
            <Sep $mx={5} />
            <Tool $w={132}><I.fromFloor />从其他楼层复制构件</Tool>
            <Tool $w={134}><I.fromFloor />复制构件到其他楼层</Tool>
            <Sep $mx={4} />
            <Tool $w={38}>查找<Caret $w={6} /></Tool>
            <Sep $mx={5} />
            <Tool $w={54}><I.up /><Spaced $ml={7}>上移</Spaced></Tool>
            <Tool><I.down /><Spaced $ml={3}>下移</Spaced></Tool>
          </ToolRow2>
          <Body>
            <ListCol>
              <SearchRow>
                <SearchInput>搜索构件...</SearchInput>
                <SearchBtn><I.search /></SearchBtn>
              </SearchRow>
              <ListBox $pt={2}>
                <Row $pl={3}>
                  <Expander><I.chevD /></Expander>
                  <Stub $w={3} /><I.rootLine /><TreeText>自定义线</TreeText>
                </Row>
                {Array.from({ length: 20 }, (_, i) => (
                  <Row key={i} $pl={31}>
                    <Branch $last={i === 19} $w={9} />
                    <ListSel $on={i === 5}><I.gear /><CodeText>ZDYX-{i + 1}</CodeText></ListSel>
                  </Row>
                ))}
              </ListBox>
            </ListCol>
            <Editor>
              <TabStrip><PropTab>属性编辑</PropTab></TabStrip>
              <PropBody>
                <PropGrid>
                  <HeadCell />
                  <HeadCell>属性名称</HeadCell>
                  <HeadCell $val>属性值</HeadCell>
                  {PROPS.map((p, i) => (
                    <React.Fragment key={p.n}>
                      <NumCell $on={i === 0}>{p.n}</NumCell>
                      <NameCell $on={i === 0} $tone={p.tone}>
                        {p.plus && <PlusBox>+</PlusBox>}
                        {p.name}{p.unit && half(p.unit)}
                      </NameCell>
                      <ValCell $on={i === 0} $muted={p.muted}>{p.val && /^[\dA-Z(]/.test(p.val) ? half(p.val) : p.val}</ValCell>
                    </React.Fragment>
                  ))}
                </PropGrid>
              </PropBody>
            </Editor>
          </Body>
        </RightCol>
      </Workspace>
      <StatusBar>
        <StatusCell $w={148} />
        <StatusCell $w={76}>层高{half(":4.2m")}</StatusCell>
        <StatusCell $w={97}>底标高{half(":-0.03m")}</StatusCell>
        <StatusCell $w={47}>{half("0")}</StatusCell>
        <StatusCell>名称在当前层当前构件类型下不允许重名</StatusCell>
        <StatusCell $w={70}>{half("200.6 FPS")}</StatusCell>
      </StatusBar>
      <Taskbar>
        <TaskSlot $w={48}><I.win /></TaskSlot>
        <TaskSlot $w={56}><I.ring /></TaskSlot>
        <TaskSlot $w={40} $state="run"><I.ie /></TaskSlot>
        <TaskSlot $w={58}><I.explorer /></TaskSlot>
        <TaskSlot $w={40}><I.mail /></TaskSlot>
        <TaskSlot $w={54}><I.edge /></TaskSlot>
        <TaskSlot $w={47} $state="on"><I.taskApp /></TaskSlot>
        <Tray>
          <TrayItem $w={25}>桌面</TrayItem>
          <TrayItem $w={26}><Chevrons $light>»</Chevrons></TrayItem>
          <TrayItem $w={14}><I.caretUp /></TrayItem>
          <TrayItem $w={34}><I.wifi /></TrayItem>
          <TrayItem $w={14}><I.mute /></TrayItem>
          <TrayItem $w={30}>中</TrayItem>
          <TrayItem $w={28}><TrayS>S</TrayS></TrayItem>
          <Clock>19:35<br />2019/2/23</Clock>
          <TrayItem $w={34}><I.notify /></TrayItem>
        </Tray>
      </Taskbar>

      <Badge>82</Badge>
      <Sogou>
        <SogouZh>中</SogouZh>
        <I.comma />
        <I.smile />
        <I.mic />
        <I.kbd />
        <I.userTag />
        <I.shirt />
        <I.tiles />
      </Sogou>
      <SogouS>S</SogouS>

      <Dialog>
        <DialogTitle>截面编辑</DialogTitle>
        <DialogInner>
          <DialogTabs>
            <DialogTab>截面</DialogTab>
            <DialogTab $on>配筋</DialogTab>
          </DialogTabs>
          <DialogPanel>
            <DlgBar $w={546} $h={28}>
              <LeadTool $w={33}>纵筋</LeadTool>
              <Sep $mx={3} />
              <ActiveBtn $w={58}>三点画弧</ActiveBtn>
              <Caret $w={13} />
              <ComboA>A8@200<Caret $w={10} /></ComboA>
              <Sep $mx={4} />
              <Tool $w={54}><I.cursor />选择</Tool>
              <Tool $w={86}>手动设置参考线</Tool>
              <Caret $w={14} />
              <Sep $mx={4} />
              <Tool $w={76}><I.elev />设置标高</Tool>
              <Tool $w={76}><I.mark />显示标注</Tool>
              <Tool $w={26} $muted>删除</Tool>
            </DlgBar>
            <DlgBar $w={319} $mt={3} $h={23}>
              <ActiveBtn $w={34}>横筋</ActiveBtn>
              <Sep $mx={2} />
              <Tool $w={52}>钢筋类型:</Tool>
              <ActiveBtn $w={34}>直筋</ActiveBtn>
              <Tool $w={28} $ml={5}>箍筋</Tool>
              <Sep $mx={4} />
              <Tool $w={76}><I.hook />编辑弯钩</Tool>
              <Tool><I.endHead />编辑端头</Tool>
            </DlgBar>
            <CanvasWrap>
              <Drawing />
              <CoordA><CoordSel>459.903</CoordSel></CoordA>
              <CoordB>322.782</CoordB>
            </CanvasWrap>
            <DlgBar $w={236} $mt={3} $pl={5}>
              <Tool $w={48}><I.ortho />正交</Tool>
              <ActiveBtn $w={75}><I.dyn />动态输入</ActiveBtn>
              <Tool $w={52} $ml={6}><I.perp />垂点</Tool>
              <Tool><I.mid />中点</Tool>
            </DlgBar>
          </DialogPanel>
          <DlgStatus>
            <DlgCell $w={97}>(X: 460 Y: 323)</DlgCell>
            <DlgCell>
              左键或Shift+左键指定起点(可选择纵筋中心点);按右键中止或ESC键取消;
              <Grip viewBox="0 0 10 10"><path d="M8 2h1M5 5h1M8 5h1M2 8h1M5 8h1M8 8h1" stroke="#aaa" /></Grip>
            </DlgCell>
          </DlgStatus>
        </DialogInner>
      </Dialog>

      <Note>关闭正交，开启动态</Note>
      <Marks viewBox="740 530 110 190">
        <ellipse cx="795" cy="666" rx="41.5" ry="45.5" fill="none" stroke="#f00" strokeWidth="7" />
        <path d="M776 555L791 610" fill="none" stroke="#f00" strokeWidth="5" />
        <path d="M773 536L790 562L778 558L768 566Z" fill="#f00" />
        <path d="M793 620L775 598L787 602L798 595Z" fill="#f00" />
      </Marks>
    </Root>
  );
}
